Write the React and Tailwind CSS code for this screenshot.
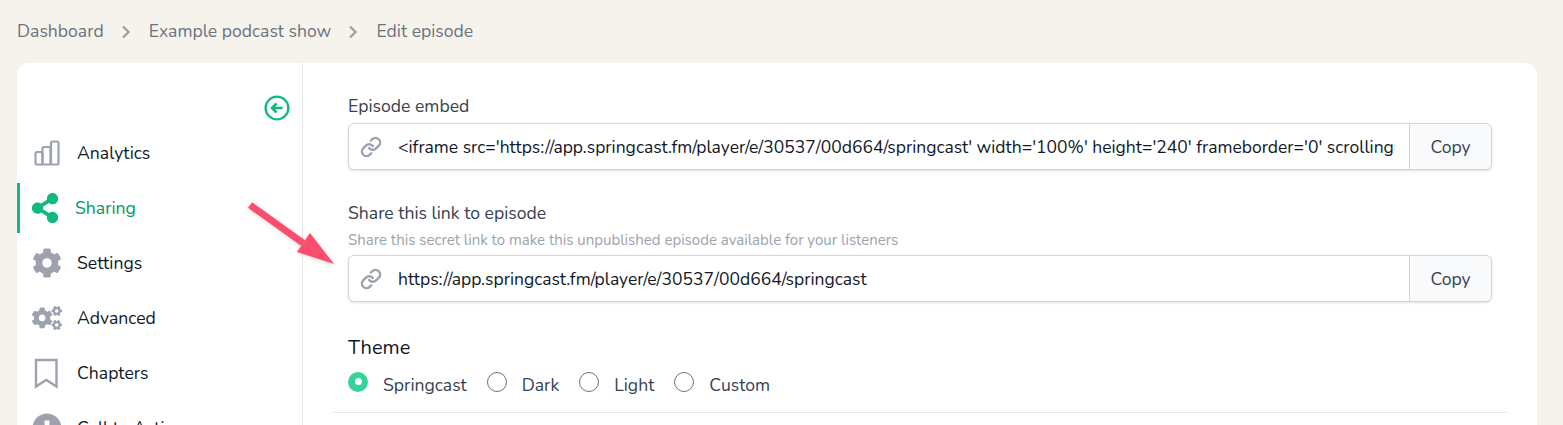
import React from "react";
import { Link as LinkIcon } from "lucide-react";
import { FaCog, FaCogs, FaShareAlt, FaExclamationCircle } from "react-icons/fa";

const F = { fontFamily: '"Nunito", "Lato", "Noto Sans", sans-serif' };

const Chevron = () => (
  <svg width="10" height="14" viewBox="0 0 10 14" className="shrink-0">
    <path d="M2 1.5 L7.5 7 L2 12.5" fill="none" stroke="#9ca3af" strokeWidth="2.4" />
  </svg>
);

const BarsIcon = () => (
  <svg width="26" height="26" viewBox="0 0 26 26" fill="none" stroke="#9ca3af" strokeWidth="2.2" strokeLinejoin="round">
    <rect x="1.5" y="12" width="7" height="12.5" rx="1.5" />
    <rect x="8.5" y="7" width="8" height="17.5" rx="1.5" />
    <rect x="17" y="1.5" width="7.500" height="23" rx="1.5" />
  </svg>
);

const BookmarkIcon = () => (
  <svg width="24" height="31" viewBox="0 0 24 31" fill="none" className="-translate-x-[1px]">
    <path d="M2 2h20.500v26.500L12.250 22 2 28.500z" stroke="#9ca3af" strokeWidth="2.400" strokeLinejoin="miter" />
  </svg>
);

const BackIcon = () => (
  <svg width="26" height="26" viewBox="0 0 26 26" fill="none" stroke="#10b981">
    <circle cx="13" cy="13" r="11.400" strokeWidth="2.300" />
    <path d="M18.500 13H8M12.500 8.500 8 13l4.500 4.500" strokeWidth="2.600" />
  </svg>
);

const NavItem = ({ icon, label, active }) => (
  <div
    className={
      "mb-[5px] flex h-[50px] shrink-0 items-center " +
      (active ? "border-l-[3px] border-[#10b981] pl-[10px] text-[#059669]" : "pl-[15px] text-[#111827]")
    }
  >
    <span className="flex w-[30px] items-center justify-center">{icon}</span>
    <span className="ml-[15px] text-[17.600px]">{label}</span>
  </div>
);

const CopyField = ({ value }) => (
  <div className="flex h-[47px] items-stretch rounded-md border border-[#d1d5db] bg-white shadow-sm">
    <div className="flex w-[44px] shrink-0 items-center justify-center">
      <LinkIcon size={22} color="#9ca3af" strokeWidth={2.6} />
    </div>
    <div className="ml-[5px] mr-[14px] min-w-0 flex-1 overflow-hidden whitespace-nowrap text-[17.500px] leading-[46px] text-[#111827]">
      {value}
    </div>
    <div className="flex w-[82px] shrink-0 items-center justify-center rounded-r-md border-l border-[#d1d5db] bg-[#f9fafb] pt-[2px] text-[17.600px] text-[#374151]">
      Copy
    </div>
  </div>
);

const Radio = ({ label, checked }) => (
  <label className="flex items-center">
    {checked ? (
      <span className="flex h-[20px] w-[20px] items-center justify-center rounded-full bg-[#34d399]">
        <span className="h-[7px] w-[7px] rounded-full bg-white" />
      </span>
    ) : (
      <span className="h-[20px] w-[20px] rounded-full border border-[#6b7280] bg-white" />
    )}
    <span className="ml-[15px] translate-y-[3px] text-[17.600px] text-[#374151]">{label}</span>
  </label>
);

export default function App() {
  return (
    <div style={F} className="relative h-[425px] overflow-hidden bg-[#f6f3ed] pl-[17px] pr-[26px]">
      <nav className="flex h-[63px] items-center text-[17.600px] text-[#6b7280]">
        <span>Dashboard</span>
        <span className="ml-[17px] mr-[18px]"><Chevron /></span>
        <span>Example podcast show</span>
        <span className="ml-[17px] mr-[18px]"><Chevron /></span>
        <span>Edit episode</span>
      </nav>

      <div className="flex h-[400px] rounded-t-xl bg-white">
        <aside className="flex w-[286px] shrink-0 flex-col border-r border-[#e5e7eb]">
          <div className="flex h-[65px] shrink-0 items-end justify-end pb-[7px] pr-[12px]"><BackIcon /></div>
          <NavItem icon={<BarsIcon />} label="Analytics" />
          <NavItem icon={<FaShareAlt size={30} color="#10b981" />} label="Sharing" active />
          <NavItem icon={<FaCog size={30} color="#9ca3af" />} label="Settings" />
          <NavItem icon={<FaCogs size={32} color="#9ca3af" />} label="Advanced" />
          <NavItem icon={<BookmarkIcon />} label="Chapters" />
          <NavItem icon={<FaExclamationCircle size={30} color="#9ca3af" />} label="Call to Action" />
        </aside>

        <main className="min-w-0 flex-1 px-[30px]">
          <div className="border-b border-[#e5e7eb] px-[15px] pt-[31px] pb-[16px]">
            <div className="text-[17.600px] leading-[24px] text-[#374151]">Episode embed</div>
            <div className="mt-[5px]">
              <CopyField value="<iframe src='https://app.springcast.fm/player/e/30537/00d664/springcast' width='100%' height='240' frameborder='0' scrolling='no' seamless='true'></iframe>" />
            </div>
            <div className="mt-[31px] text-[17.600px] leading-[24px] text-[#374151]">Share this link to episode</div>
            <div className="mt-[5px] text-[15px] leading-[20px] text-[#9ca3af]">
              Share this secret link to make this unpublished episode available for your listeners
            </div>
            <div className="mt-[5px]">
              <CopyField value="https://app.springcast.fm/player/e/30537/00d664/springcast" />
            </div>
            <div className="mt-[32px] text-[20px] leading-[28px] text-[#111827]">Theme</div>
            <div className="mt-[6px] flex h-[28px] items-center gap-[20px]">
              <Radio label="Springcast" checked />
              <Radio label="Dark" />
              <Radio label="Light" />
              <Radio label="Custom" />
            </div>
          </div>
        </main>
      </div>

      <svg width="100" height="75" viewBox="0 0 100 75" className="pointer-events-none absolute left-[242px] top-[197px] drop-shadow-sm">
        <path d="M8 8 L61 46" stroke="#fb4d6e" strokeWidth="7" />
        <path d="M55 55 L92 67 L68 36 Z" fill="#fb4d6e" />
      </svg>
    </div>
  );
}
